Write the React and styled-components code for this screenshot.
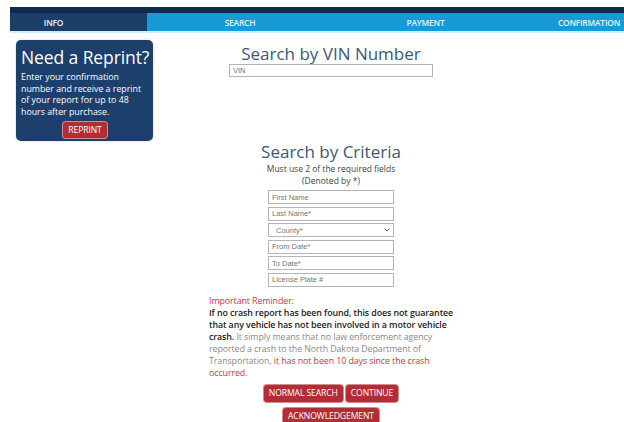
import React from 'react';
import styled, { createGlobalStyle } from 'styled-components';

const GlobalStyle = createGlobalStyle`
  body {
    margin: 0;
    background: #ffffff;
    font-family: "Open Sans", "Liberation Sans", sans-serif;
    overflow: hidden;
  }
`;

const Page = styled.div`
  width: 624px;
  height: 422px;
  overflow: hidden;
`;

const TopBand = styled.div`
  margin: 7px 0 0 10px;
  height: 6px;
  background: #0e2c50;
`;

const Steps = styled.div`
  margin-left: 10px;
  display: grid;
  grid-template-columns: 137px 186px 185px 1fr;
  height: 18px;
  border-bottom: 2px solid #cfeefa;
`;

const Step = styled.div`
  display: flex;
  align-items: center;
  justify-content: ${(p) => (p.$align === 'end' ? 'flex-end' : 'center')};
  padding-right: ${(p) => p.$padRight || 0}px;
  background: ${(p) => (p.$active ? '#1b3f68' : '#169bd6')};
  color: #e8f4fb;
  font-size: 8.4px;
  font-weight: 600;
  letter-spacing: -0.2px;
`;

const Body = styled.div`
  display: grid;
  grid-template-columns: 137px 356px;
  padding: 7px 0 0 16px;
`;

const ReprintCard = styled.div`
  align-self: start;
  background: #1c3f6c;
  border-radius: 5px;
  padding: 6px 4px 3px 5px;
  color: #ffffff;
  display: flex;
  flex-direction: column;
  box-shadow: 0 0 2px rgba(0, 0, 0, 0.25);
`;

const CardTitle = styled.div`
  font-size: 17.5px;
  line-height: 22px;
  white-space: nowrap;
  letter-spacing: -0.1px;
`;

const CardText = styled.div`
  font-size: 8.8px;
  line-height: 11.5px;
  margin-top: 4px;
`;

const RedButton = styled.button`
  background: #b32d37;
  color: #ffffff;
  border: none;
  border-radius: 3px;
  font-family: "Open Sans", "Liberation Sans", sans-serif;
  font-size: 8.6px;
  letter-spacing: -0.1px;
  padding: 0 5px;
  height: ${(p) => p.$h || 16}px;
  cursor: pointer;
  box-shadow: 0 0 0 1px #d98a8f;
`;

const CardButton = styled(RedButton)`
  align-self: center;
  margin: 4px 0 0;
`;

const Main = styled.div`
  display: flex;
  flex-direction: column;
  align-items: center;
  color: #333;
`;

const Heading = styled.div`
  font-size: 17px;
  line-height: 20px;
  color: #3d5876;
  margin-top: ${(p) => p.$top || 0}px;
`;

const VinInput = styled.input`
  box-sizing: border-box;
  width: 204px;
  height: 13px;
  border: 1px solid #b5b5b5;
  font-family: "Liberation Sans", Arial, sans-serif;
  font-size: 7.5px;
  padding: 0 3px;
  &::placeholder { color: #777; }
`;

const Note = styled.div`
  font-size: 8.5px;
  line-height: 12px;
  color: #444;
  text-align: center;
  margin-top: 1px;
`;

const Fields = styled.div`
  display: flex;
  flex-direction: column;
  gap: 2.6px;
  margin-top: 3px;
`;

const Field = styled.input`
  display: block;
  box-sizing: border-box;
  width: 126px;
  height: 14px;
  border: 1px solid #b5b5b5;
  font-family: "Liberation Sans", Arial, sans-serif;
  font-size: 7.5px;
  padding: 0 3px;
  &::placeholder { color: #777; }
`;

const SelectWrap = styled.div`
  position: relative;
  width: 126px;
  height: 14px;
`;

const Select = styled.select`
  display: block;
  box-sizing: border-box;
  width: 100%;
  height: 100%;
  margin: 0;
  border: 1px solid #b5b5b5;
  border-radius: 0;
  background: #fff;
  appearance: none;
  font-family: "Liberation Sans", Arial, sans-serif;
  font-size: 7.5px;
  color: #777;
  padding: 0 0 0 7px;
`;

const Chevron = styled.svg`
  position: absolute;
  right: 4px;
  top: 5px;
  pointer-events: none;
`;

const Reminder = styled.div`
  width: 252px;
  margin: 8px 0 0 8px;
  font-size: 8.9px;
  line-height: 12px;
  color: #8a8a8a;
  white-space: nowrap;
  letter-spacing: -0.1px;
`;

const Red = styled.span`
  color: #d8333d;
`;

const Strong = styled.span`
  color: #222;
  font-weight: 600;
`;

const ButtonRow = styled.div`
  display: flex;
  gap: 3px;
  justify-content: center;
  margin-top: ${(p) => p.$top || 0}px;
`;

export default function App() {
  return (
    <Page>
      <GlobalStyle />
      <TopBand />
      <Steps>
        <Step $active $padRight={50}>INFO</Step>
        <Step>SEARCH</Step>
        <Step>PAYMENT</Step>
        <Step $align="end" $padRight={4}>CONFIRMATION</Step>
      </Steps>

      <Body>
        <ReprintCard>
          <CardTitle>Need a Reprint?</CardTitle>
          <CardText>
            Enter your confirmation number and receive a reprint of your report for up to 48 hours after purchase.
          </CardText>
          <CardButton>REPRINT</CardButton>
        </ReprintCard>

        <Main>
          <Heading $top={4}>Search by VIN Number</Heading>
          <VinInput placeholder="VIN" />

          <Heading $top={65}>Search by Criteria</Heading>
          <Note>
            Must use 2 of the required fields
            <br />
            (Denoted by *)
          </Note>
          <Fields>
            <Field placeholder="First Name" />
            <Field placeholder="Last Name*" />
            <SelectWrap>
              <Select defaultValue="">
                <option value="">County*</option>
              </Select>
              <Chevron width="6" height="4" viewBox="0 0 6 4">
                <path d="M0.6 0.6 L3 3 L5.4 0.6" fill="none" stroke="#666" strokeWidth="1" />
              </Chevron>
            </SelectWrap>
            <Field placeholder="From Date*" />
            <Field placeholder="To Date*" />
            <Field placeholder="License Plate #" />
          </Fields>

          <Reminder>
            <Red>Important Reminder:</Red>
            <br />
            <Strong>If no crash report has been found, this does not guarantee</Strong>
            <br />
            <Strong>that any vehicle has not been involved in a motor vehicle</Strong>
            <br />
            <Strong>crash.</Strong> It simply means that no law enforcement agency
            <br />
            reported a crash to the North Dakota Department of
            <br />
            Transportation, <Red>it has not been 10 days since the crash</Red>
            <br />
            <Red>occurred.</Red>
          </Reminder>

          <ButtonRow $top={6}>
            <RedButton $h={17}>NORMAL SEARCH</RedButton>
            <RedButton $h={17}>CONTINUE</RedButton>
          </ButtonRow>
          <ButtonRow $top={6}>
            <RedButton $h={17}>ACKNOWLEDGEMENT</RedButton>
          </ButtonRow>
        </Main>
      </Body>
    </Page>
  );
}
